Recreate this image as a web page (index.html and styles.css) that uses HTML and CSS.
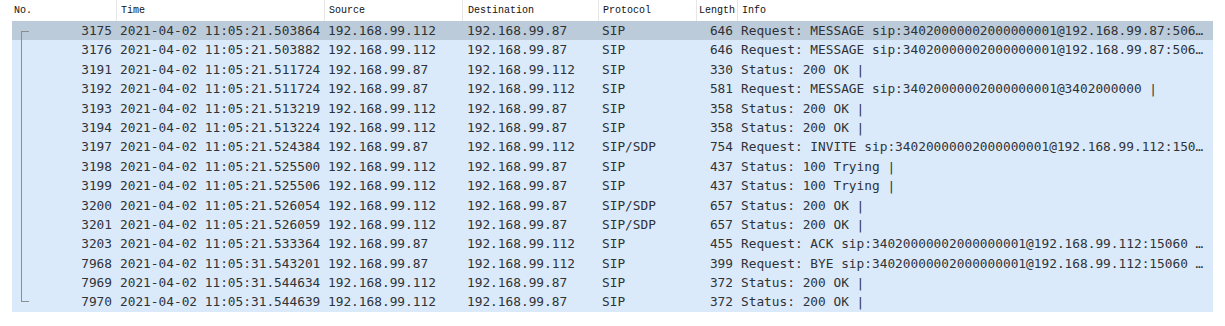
FILE: index.html
```html
<!DOCTYPE html>
<html lang="en">
<head>
    <meta charset="UTF-8">
    <title>Packet list</title>
    <link rel="stylesheet" href="styles.css">
</head>
<body>
    <div class="packet-list">
        <div class="list-header">
            <div class="col">No.</div>
            <div class="col">Time</div>
            <div class="col">Source</div>
            <div class="col dst">Destination</div>
            <div class="col">Protocol</div>
            <div class="col len">Length</div>
            <div class="col">Info</div>
        </div>
        <div class="rows">
            <!-- conversation bracket -->
            <div class="tree-bracket"></div>
            <div class="row selected"><div class="col num">3175</div><div class="col">2021-04-02 11:05:21.503864</div><div class="col">192.168.99.112</div><div class="col dst">192.168.99.87</div><div class="col">SIP</div><div class="col len">646</div><div class="col info">Request: MESSAGE sip:34020000002000000001@192.168.99.87:506…</div></div>
            <div class="row"><div class="col num">3176</div><div class="col">2021-04-02 11:05:21.503882</div><div class="col">192.168.99.112</div><div class="col dst">192.168.99.87</div><div class="col">SIP</div><div class="col len">646</div><div class="col info">Request: MESSAGE sip:34020000002000000001@192.168.99.87:506…</div></div>
            <div class="row"><div class="col num">3191</div><div class="col">2021-04-02 11:05:21.511724</div><div class="col">192.168.99.87</div><div class="col dst">192.168.99.112</div><div class="col">SIP</div><div class="col len">330</div><div class="col info">Status: 200 OK |</div></div>
            <div class="row"><div class="col num">3192</div><div class="col">2021-04-02 11:05:21.511724</div><div class="col">192.168.99.87</div><div class="col dst">192.168.99.112</div><div class="col">SIP</div><div class="col len">581</div><div class="col info">Request: MESSAGE sip:34020000002000000001@3402000000 |</div></div>
            <div class="row"><div class="col num">3193</div><div class="col">2021-04-02 11:05:21.513219</div><div class="col">192.168.99.112</div><div class="col dst">192.168.99.87</div><div class="col">SIP</div><div class="col len">358</div><div class="col info">Status: 200 OK |</div></div>
            <div class="row"><div class="col num">3194</div><div class="col">2021-04-02 11:05:21.513224</div><div class="col">192.168.99.112</div><div class="col dst">192.168.99.87</div><div class="col">SIP</div><div class="col len">358</div><div class="col info">Status: 200 OK |</div></div>
            <div class="row"><div class="col num">3197</div><div class="col">2021-04-02 11:05:21.524384</div><div class="col">192.168.99.87</div><div class="col dst">192.168.99.112</div><div class="col">SIP/SDP</div><div class="col len">754</div><div class="col info">Request: INVITE sip:34020000002000000001@192.168.99.112:150…</div></div>
            <div class="row"><div class="col num">3198</div><div class="col">2021-04-02 11:05:21.525500</div><div class="col">192.168.99.112</div><div class="col dst">192.168.99.87</div><div class="col">SIP</div><div class="col len">437</div><div class="col info">Status: 100 Trying |</div></div>
            <div class="row"><div class="col num">3199</div><div class="col">2021-04-02 11:05:21.525506</div><div class="col">192.168.99.112</div><div class="col dst">192.168.99.87</div><div class="col">SIP</div><div class="col len">437</div><div class="col info">Status: 100 Trying |</div></div>
            <div class="row"><div class="col num">3200</div><div class="col">2021-04-02 11:05:21.526054</div><div class="col">192.168.99.112</div><div class="col dst">192.168.99.87</div><div class="col">SIP/SDP</div><div class="col len">657</div><div class="col info">Status: 200 OK |</div></div>
            <div class="row"><div class="col num">3201</div><div class="col">2021-04-02 11:05:21.526059</div><div class="col">192.168.99.112</div><div class="col dst">192.168.99.87</div><div class="col">SIP/SDP</div><div class="col len">657</div><div class="col info">Status: 200 OK |</div></div>
            <div class="row"><div class="col num">3203</div><div class="col">2021-04-02 11:05:21.533364</div><div class="col">192.168.99.87</div><div class="col dst">192.168.99.112</div><div class="col">SIP</div><div class="col len">455</div><div class="col info">Request: ACK sip:34020000002000000001@192.168.99.112:15060 …</div></div>
            <div class="row"><div class="col num">7968</div><div class="col">2021-04-02 11:05:31.543201</div><div class="col">192.168.99.87</div><div class="col dst">192.168.99.112</div><div class="col">SIP</div><div class="col len">399</div><div class="col info">Request: BYE sip:34020000002000000001@192.168.99.112:15060 …</div></div>
            <div class="row"><div class="col num">7969</div><div class="col">2021-04-02 11:05:31.544634</div><div class="col">192.168.99.112</div><div class="col dst">192.168.99.87</div><div class="col">SIP</div><div class="col len">372</div><div class="col info">Status: 200 OK |</div></div>
            <div class="row"><div class="col num">7970</div><div class="col">2021-04-02 11:05:31.544639</div><div class="col">192.168.99.112</div><div class="col dst">192.168.99.87</div><div class="col">SIP</div><div class="col len">372</div><div class="col info">Status: 200 OK |</div></div>
        </div>
    </div>
</body>
</html>
```

FILE: styles.css
```css
/* Base */
*{margin:0;padding:0;box-sizing:border-box}
body{background:#fff;width:1225px;height:326px;overflow:hidden}
.packet-list{padding-left:12px;width:1213px}
/* Column grid shared by header and rows */
.list-header,.row{display:grid;grid-template-columns:104px 208px 138px 136px 98px 41px 476px}
.col{padding-left:4px;white-space:pre;overflow:hidden}
.col.dst{padding-left:5px}
.col.len{padding-left:0;padding-right:4px;text-align:right}
/* Header */
.list-header{height:21px;font-family:'Liberation Mono',monospace;font-size:10px;color:#111}
.list-header .col{line-height:21px;border-left:1px solid #e6e6e6}
.list-header .col:first-child{border-left:none;padding-left:2px}
.list-header .col.len{text-align:left;padding-left:2px}
/* Rows */
.rows{position:relative}
.row{height:19.4px;background:#dbeafb;font-family:'DejaVu Sans Mono',monospace;font-size:12.8px;line-height:19.4px;color:#2f3236}
.row.selected{background:#bccbd9}
.col.num{padding-left:0;padding-right:4px;text-align:right}
/* Conversation bracket drawn over the first column */
.tree-bracket{position:absolute;left:8.5px;top:9.7px;bottom:9.7px;width:8px;border:1px solid #8d8d8d;border-right:none;pointer-events:none}
```
